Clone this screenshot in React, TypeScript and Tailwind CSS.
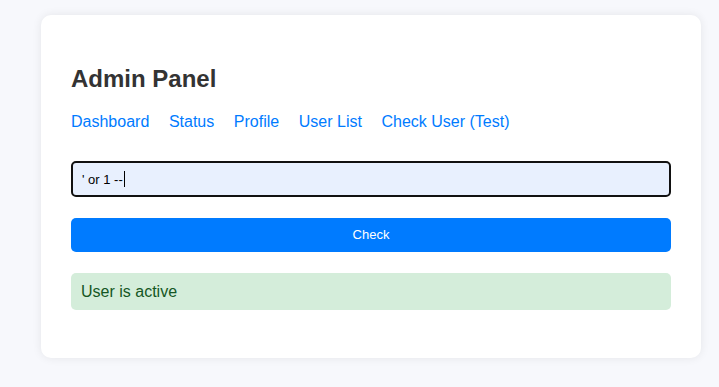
export default function App() {
  const links = ["Dashboard", "Status", "Profile", "User List", "Check User (Test)"];

  return (
    <div className="min-h-[387px] bg-[#f7f8fc] pt-[15px] font-['Liberation_Sans',Arial,sans-serif]">
      <div className="ml-[41px] w-[660px] rounded-[10px] bg-white px-[30px] pt-[50px] pb-[48px] shadow-[0_0_10px_rgba(0,0,0,0.08)]">
        <h2 className="text-[24px] leading-[28px] font-bold text-[#333]">Admin Panel</h2>
        <nav className="mt-[20px] flex gap-[19.6px] text-[16px] leading-[18px] text-[#007bff]">
          {links.map((l) => (
            <a key={l} href="#" className="hover:underline">
              {l}
            </a>
          ))}
        </nav>
        <div className="relative mt-[30px]">
          <input
            defaultValue="' or 1 --"
            className="block h-[36px] w-full rounded-[5px] border-2 border-[#111] bg-[#e8f0fe] px-[9px] text-[13px] text-black outline-none"
          />
          {/* caret */}
          <span className="pointer-events-none absolute top-[10px] left-[53px] h-[16px] w-px bg-black" />
        </div>
        <button className="mt-[21px] flex h-[34px] w-full items-center justify-center rounded-[5px] bg-[#007bff] text-[13px] text-white">
          Check
        </button>
        <div className="mt-[21px] flex h-[37px] items-center rounded-[5px] bg-[#d4edda] px-[10px] text-[16px] text-[#155724]">
          User is active
        </div>
      </div>
    </div>
  );
}
